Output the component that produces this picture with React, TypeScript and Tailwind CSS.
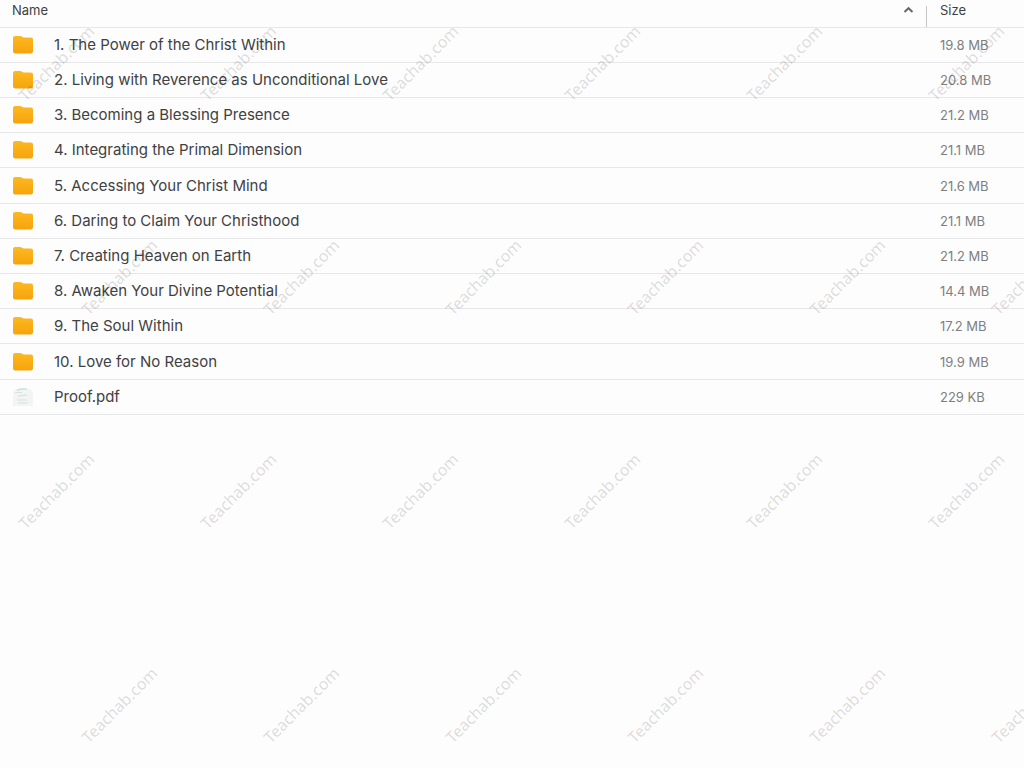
type Entry = { name: string; size: string; kind: "folder" | "file" };

const entries: Entry[] = [
  { name: "1. The Power of the Christ Within", size: "19.8 MB", kind: "folder" },
  { name: "2. Living with Reverence as Unconditional Love", size: "20.8 MB", kind: "folder" },
  { name: "3. Becoming a Blessing Presence", size: "21.2 MB", kind: "folder" },
  { name: "4. Integrating the Primal Dimension", size: "21.1 MB", kind: "folder" },
  { name: "5. Accessing Your Christ Mind", size: "21.6 MB", kind: "folder" },
  { name: "6. Daring to Claim Your Christhood", size: "21.1 MB", kind: "folder" },
  { name: "7. Creating Heaven on Earth", size: "21.2 MB", kind: "folder" },
  { name: "8. Awaken Your Divine Potential", size: "14.4 MB", kind: "folder" },
  { name: "9. The Soul Within", size: "17.2 MB", kind: "folder" },
  { name: "10. Love for No Reason", size: "19.9 MB", kind: "folder" },
  { name: "Proof.pdf", size: "229 KB", kind: "file" },
];

function FolderIcon() {
  return (
    <svg width="22" height="20" viewBox="0 0 22 20" className="shrink-0" aria-hidden="true">
      <defs>
        <linearGradient id="folder" x1="0" y1="0" x2="0" y2="1">
          <stop offset="0" stopColor="#fbb921" />
          <stop offset="1" stopColor="#f7a30c" />
        </linearGradient>
      </defs>
      <path
        d="M1 3.200C1 1.900 1.900 1 3.200 1H8c.8 0 1.300.2 1.800.6l.6.5c.4.3.8.4 1.500.4h6.900c1.300 0 2.200.9 2.200 2.200v11.600c0 1.300-.9 2.200-2.200 2.200H3.200C1.900 18.500 1 17.600 1 16.300Z"
        fill="url(#folder)"
      />
    </svg>
  );
}

function FileIcon() {
  return (
    <svg width="22" height="20" viewBox="0 0 22 20" className="shrink-0" aria-hidden="true">
      <path d="M4 2h14l3 3v14H1V5Z" fill="#f3f4f4" />
      <path d="M5 3.500l3-1.500h7" stroke="#c3e6e0" strokeWidth="1.500" fill="none" />
      <path d="M3 5.500h7M6 9l9-1M5 13h10M6 16h10" stroke="#dcdfdf" strokeWidth="1" fill="none" />
    </svg>
  );
}

function WatermarkRow({ shifted }: { shifted: boolean }) {
  return (
    <div className={`flex h-[214px] shrink-0 ${shifted ? "ml-7" : "-ml-[35px]"}`}>
      {Array.from({ length: 6 }, (_, i) => (
        <div key={i} className="flex w-[182px] shrink-0 items-center justify-center">
          <span className="-rotate-45 text-base text-black/15">Teachab.com</span>
        </div>
      ))}
    </div>
  );
}

export default function App() {
  return (
    <main className="relative min-h-screen overflow-hidden bg-[#fdfdfd] font-['Inter',sans-serif] text-[#404143]">
      <table className="w-full table-fixed border-collapse text-left">
        <thead>
          <tr className="h-[27px] border-b border-[#e6e7e8]">
            <th scope="col" aria-sort="ascending" className="p-0 align-top font-normal">
              <button
                type="button"
                className="flex w-full items-center justify-between px-3 text-[13px] leading-5"
              >
                Name
                <svg width="11" height="8" viewBox="0 0 11 8" aria-hidden="true">
                  <path d="M1.500 6L5.500 2.200L9.500 6" fill="none" stroke="#66686a" strokeWidth="2" />
                </svg>
              </button>
            </th>
            <th scope="col" className="w-[98px] p-0 align-top font-normal">
              <div className="mt-1.5 flex h-[21px] border-l border-[#c4c5c6] pl-[13px]">
                <button type="button" className="-mt-1.5 h-5 text-[13px] leading-5">
                  Size
                </button>
              </div>
            </th>
          </tr>
        </thead>
        <tbody>
          {entries.map((entry) => (
            <tr key={entry.name} className="h-[35px] border-b border-[#e6e7e8] nth-[5n]:h-9">
              <td className="p-0 pl-3">
                <div className="flex items-center gap-5">
                  {entry.kind === "folder" ? <FolderIcon /> : <FileIcon />}
                  <a href="#" className="truncate text-[15px] leading-5">
                    {entry.name}
                  </a>
                </div>
              </td>
              <td className="p-0 pl-3.5 text-[13px] leading-5 text-[#7d7f81]">{entry.size}</td>
            </tr>
          ))}
        </tbody>
      </table>

      <div
        aria-hidden="true"
        className="pointer-events-none absolute inset-0 overflow-hidden font-['Noto_Sans',sans-serif] select-none"
      >
        <div className="-mt-11 flex flex-col">
          {Array.from({ length: 4 }, (_, i) => (
            <WatermarkRow key={i} shifted={i % 2 === 1} />
          ))}
        </div>
      </div>
    </main>
  );
}
